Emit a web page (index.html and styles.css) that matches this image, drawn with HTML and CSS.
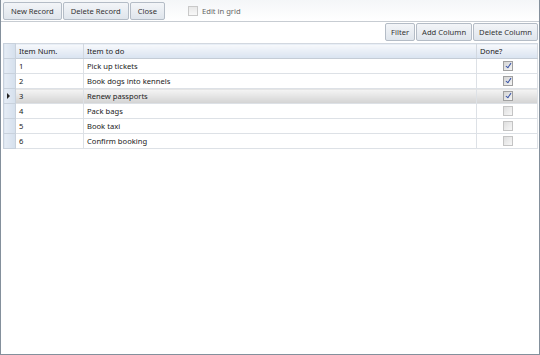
FILE: index.html
```html
<!DOCTYPE html>
<html lang="en">
<head>
    <meta charset="UTF-8">
    <title>To do</title>
    <link rel="stylesheet" href="styles.css">
</head>
<body>
    <div class="window">
        <div class="toolbar">
            <button class="btn">New Record</button>
            <button class="btn">Delete Record</button>
            <button class="btn">Close</button>
            <label class="edit-grid"><span class="box"></span>Edit in grid</label>
        </div>
        <div class="subbar">
            <button class="btn">Filter</button>
            <button class="btn">Add Column</button>
            <button class="btn">Delete Column</button>
        </div>
        <table class="grid">
            <colgroup>
                <col class="c-head">
                <col class="c-num">
                <col class="c-todo">
                <col class="c-done">
            </colgroup>
            <thead>
                <tr>
                    <th class="rowhead"></th>
                    <th>Item Num.</th>
                    <th>Item to do</th>
                    <th>Done?</th>
                </tr>
            </thead>
            <tbody>
                <tr>
                    <td class="rowhead"></td>
                    <td>1</td>
                    <td>Pick up tickets</td>
                    <td class="done"><span class="check on"></span></td>
                </tr>
                <tr>
                    <td class="rowhead"></td>
                    <td>2</td>
                    <td>Book dogs into kennels</td>
                    <td class="done"><span class="check on"></span></td>
                </tr>
                <tr class="current">
                    <td class="rowhead"><span class="arrow"></span></td>
                    <td>3</td>
                    <td>Renew passports</td>
                    <td class="done"><span class="check on"></span></td>
                </tr>
                <tr>
                    <td class="rowhead"></td>
                    <td>4</td>
                    <td>Pack bags</td>
                    <td class="done"><span class="check"></span></td>
                </tr>
                <tr>
                    <td class="rowhead"></td>
                    <td>5</td>
                    <td>Book taxi</td>
                    <td class="done"><span class="check"></span></td>
                </tr>
                <tr>
                    <td class="rowhead"></td>
                    <td>6</td>
                    <td>Confirm booking</td>
                    <td class="done"><span class="check"></span></td>
                </tr>
            </tbody>
        </table>
    </div>
</body>
</html>
```

FILE: styles.css
```css
body {
    margin: 0;
    font-family: "Noto Sans", "Open Sans", sans-serif;
    font-size: 7.6px;
    color: #222;
    background: #fff;
}

.window {
    width: 540px;
    height: 355px;
    box-sizing: border-box;
    border: 1px solid #84909c;
    border-top: none;
    background: #fff;
}

.toolbar {
    display: flex;
    align-items: flex-start;
    gap: 1px;
    height: 22px;
    box-sizing: border-box;
    padding: 2px 0 0 2px;
    border-bottom: 1px solid #c7ccd2;
    background: linear-gradient(#f4f6f8, #fff);
}

.btn {
    height: 18px;
    margin: 0;
    padding: 0 7px;
    font-family: inherit;
    font-size: 7.6px;
    line-height: 16px;
    color: #333;
    border: 1px solid #b4bcc6;
    border-radius: 2px;
    background: linear-gradient(#f3f5f8, #dfe5ec);
    cursor: pointer;
}

.edit-grid {
    display: flex;
    align-items: center;
    gap: 4px;
    height: 18px;
    margin-left: 22px;
    color: #666;
}

.edit-grid .box {
    width: 8px;
    height: 8px;
    border: 1px solid #c9c9c9;
    background: linear-gradient(#e8e8e8, #f8f8f8);
}

.subbar {
    display: flex;
    justify-content: flex-end;
    gap: 1px;
    height: 18px;
    padding: 1px 1px 1px 0;
    margin-bottom: 1px;
}

.subbar .btn {
    padding: 0 5px;
}

.grid {
    width: 534px;
    margin-left: 2px;
    border-collapse: collapse;
    table-layout: fixed;
    border: 1px solid #b9c0c8;
}

.c-head { width: 12px; }
.c-num { width: 68px; }
.c-todo { width: 393px; }
.c-done { width: 61px; }

.grid th,
.grid td {
    height: 14px;
    padding: 0 0 0 3px;
    text-align: left;
    font-weight: normal;
    line-height: 14px;
    white-space: nowrap;
    border: 1px solid #dde1e6;
}

.grid th {
    background: linear-gradient(#f7f9fc, #d9e3f0);
    border-color: #d2d8e0;
    border-bottom-color: #c4ccd6;
}

.grid .rowhead {
    padding: 0;
    background: linear-gradient(90deg, #e6edf6, #d4dfec);
    border-color: #c8d1dc;
}

.grid tr.current td {
    background: linear-gradient(#f5f5f5, #d3d3d3);
}

.grid tr.current td.rowhead {
    background: linear-gradient(90deg, #e6edf6, #d4dfec);
}

.arrow {
    display: block;
    width: 0;
    height: 0;
    margin-left: 3px;
    border-top: 3px solid transparent;
    border-bottom: 3px solid transparent;
    border-left: 3px solid #222;
}

.grid td.done {
    text-align: center;
    padding: 0;
}

.check {
    position: relative;
    display: inline-block;
    vertical-align: middle;
    width: 8px;
    height: 8px;
    margin-top: -2px;
    margin-left: 1px;
    border: 1px solid #c4c4c4;
    background: linear-gradient(135deg, #dedede, #f7f7f7);
}

.check.on {
    border-color: #a0a0a0;
    background: linear-gradient(135deg, #d4d4d4, #f4f4f4);
}

.check.on::after {
    content: "";
    position: absolute;
    left: 3px;
    top: 0;
    width: 2px;
    height: 5px;
    border: solid #3a55a8;
    border-width: 0 1px 1px 0;
    transform: rotate(35deg);
}
```
